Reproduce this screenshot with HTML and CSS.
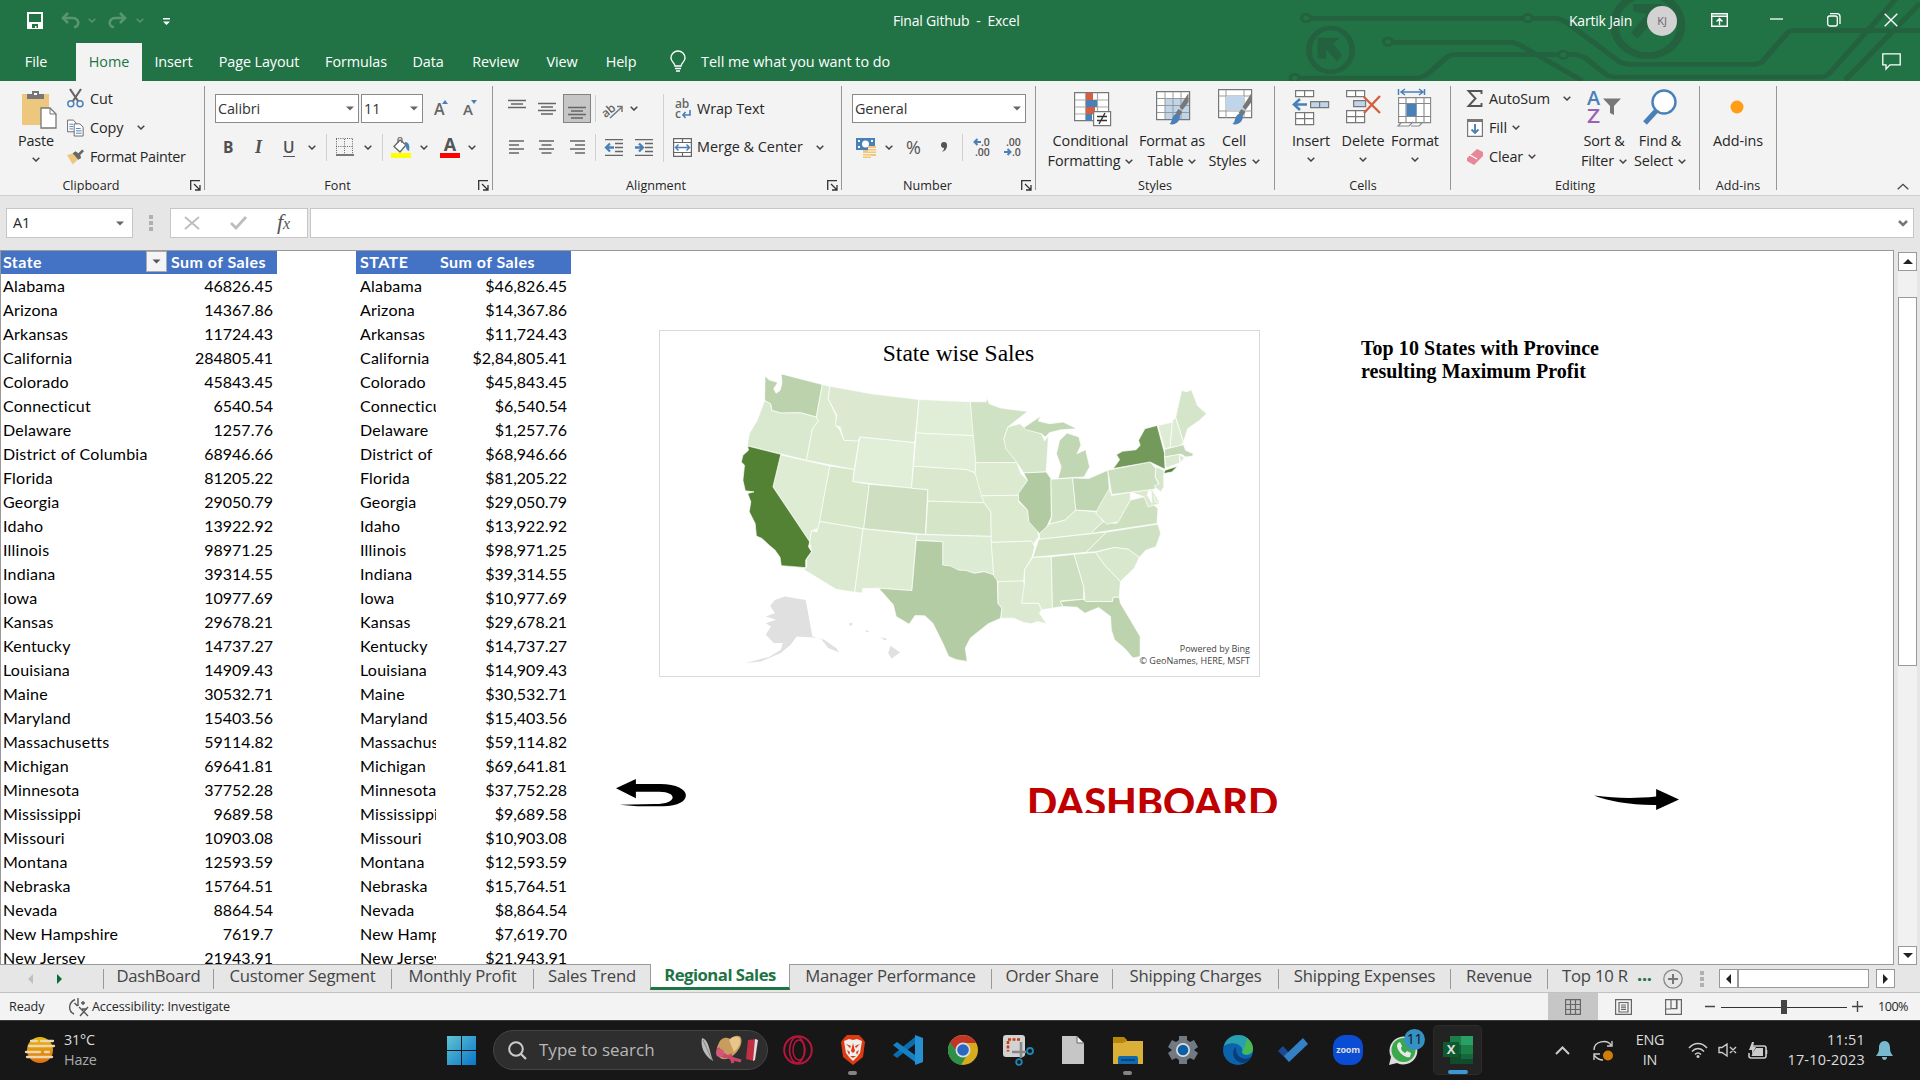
FILE: index.html
```html
<!DOCTYPE html>
<html lang="en">
<head>
<meta charset="utf-8">
<title>Final Github - Excel</title>
<link rel="stylesheet" href="styles.css">
</head>
<body>
<svg class="defs" width="0" height="0">
  <symbol id="chev" viewBox="0 0 8 5"><path d="M.7.7 4 4 7.3.7" fill="none" stroke="currentColor" stroke-width="1.5"/></symbol>
  <symbol id="tri" viewBox="0 0 8 5"><path d="M0 .5h8L4 4.5z" fill="currentColor"/></symbol>
  <symbol id="launch" viewBox="0 0 11 11"><path d="M.7 10V.7H10M4 4l5.5 5.5M10 5v5H5" fill="none" stroke="#333" stroke-width="1.3"/></symbol>
  <symbol id="brush" viewBox="0 0 20 34"><path d="M19 0v9l-6 8-3-3z" fill="#777"/><path d="M9 16l4 3-3 4-4-3z" fill="#777"/><path d="M6 21c4-1 6 3 3 7-2 3-6 4-9 3 3-2 2-8 6-10z" fill="#4a80b8"/></symbol>
</svg>

<header class="top">
  <svg class="circuit" viewBox="0 0 1568 243" preserveAspectRatio="none">
    <g fill="none" stroke="#24613f" stroke-width="14">
      <path d="M78 55H593M620 55h60l20 10L835 188l20 5h310l15-6 65-91 10-4h318"/>
      <path d="M280 127h290l18 8L740 242M50 234h290l18-8 50-54 14-8h258M706 164h22l20 10 54 52 16 5h512l14-8L1510-5M1385 240 1568 10"/>
      <circle cx="64" cy="54" r="11" stroke-width="8"/><circle cx="607" cy="54" r="11" stroke-width="8"/><circle cx="265" cy="125" r="11" stroke-width="8"/><circle cx="694" cy="164" r="11" stroke-width="8"/><circle cx="36" cy="234" r="11" stroke-width="8"/>
      <ellipse cx="124" cy="150" rx="53" ry="66"/><ellipse cx="901" cy="75" rx="82" ry="92" stroke-width="20"/>
    </g>
    <path d="M92 113h55l-17 18 22 34-12 20-27-37v28H92z" fill="#24613f"/>
    <path d="M865 12h70v70l-20-20-40 55-15-18 38-56-33-10z" fill="#24613f"/>
  </svg>
  <div class="titlebar">
    <svg width="16" height="17" viewBox="0 0 16 17"><path d="M1 1h14v15H1z" fill="none" stroke="#fff" stroke-width="2"/><path d="M1 10h14v6H1z" fill="#fff"/><path d="M5 12h6v4H9.500v-2H8v2H5z" fill="#217346"/></svg>
    <svg class="dim" width="19" height="16" viewBox="0 0 19 16"><path d="M7 1 2 6l5 5M2 6h9c8 0 8 9 2 9" fill="none" stroke="currentColor" stroke-width="2.600"/></svg>
    <svg class="dim" width="8" height="5"><use href="#chev"/></svg>
    <svg class="dim" width="19" height="16" viewBox="0 0 19 16"><path d="m12 1 5 5-5 5M17 6H8C0 6 0 15 6 15" fill="none" stroke="currentColor" stroke-width="2.600"/></svg>
    <svg class="dim" width="8" height="5"><use href="#chev"/></svg>
    <svg class="qat" width="7" height="8" viewBox="0 0 7 8"><path d="M0 0h7v1.500H0zM0 3.500h7L3.500 7z" fill="#fff"/></svg>
    <span class="doc">Final Github&nbsp; -&nbsp; Excel</span>
    <span class="user">Kartik Jain</span>
    <span class="avatar">KJ</span>
    <svg width="17" height="14" viewBox="0 0 17 14"><path d="M.7.7h15.600v12.600H.7zM.7 3.300h15.600M8.500 12V6M5.500 8.500l3-3 3 3" fill="none" stroke="#fff" stroke-width="1.400"/></svg>
    <svg width="13" height="14" viewBox="0 0 13 14"><path d="M0 6h13" stroke="#fff" stroke-width="1.300"/></svg>
    <svg width="14" height="14" viewBox="0 0 14 14"><rect x=".7" y="3" width="9.600" height="10" rx="2" fill="none" stroke="#fff" stroke-width="1.300"/><path d="M3 .7h7a3 3 0 0 1 3 3V11" fill="none" stroke="#fff" stroke-width="1.300"/></svg>
    <svg width="14" height="14" viewBox="0 0 14 14"><path d="m.7.7 12.600 12.600M13.300.7.7 13.300" stroke="#fff" stroke-width="1.400"/></svg>
  </div>
  <nav class="tabs">
    <span>File</span><span class="on">Home</span><span>Insert</span><span>Page Layout</span><span>Formulas</span><span>Data</span><span>Review</span><span>View</span><span>Help</span>
    <svg width="16" height="21" viewBox="0 0 16 21"><path d="M5 15c0-3-4-4-4-8a7 7 0 0 1 14 0c0 4-4 5-4 8zM5 17.500h6M6 20h4" fill="none" stroke="#fff" stroke-width="1.400"/></svg>
    <span class="tell">Tell me what you want to do</span>
    <svg width="19" height="17" viewBox="0 0 19 17"><path d="M.8.8h17.400v11H8L4 16v-4.200H.8z" fill="none" stroke="#fff" stroke-width="1.300"/></svg>
  </nav>
</header>

<section class="ribbon">
  <div class="group">
    <div class="clip">
      <div class="big paste">
        <svg width="35" height="39" viewBox="0 0 35 39"><path d="M0 4h27v31H0z" fill="#eec77e"/><path d="M5 9V4h5V1h7v3h5v5z" fill="#777"/><path d="M12 3h3v2h-3z" fill="#fff"/><path d="M19 18h9l6 6v14H19z" fill="#fff" stroke="#777" stroke-width="1.300"/><path d="M28 18v6h6" fill="none" stroke="#777"/></svg>
        <span>Paste</span><svg class="chev"><use href="#chev"/></svg>
      </div>
      <div class="list">
        <div><svg width="17" height="19" viewBox="0 0 17 19"><path d="M3 0l8 12M14 0 6 12" stroke="#666" stroke-width="2.200"/><circle cx="3.800" cy="14.800" r="3" fill="none" stroke="#4a80b8" stroke-width="1.500"/><circle cx="13" cy="14.800" r="3" fill="none" stroke="#4a80b8" stroke-width="1.500"/></svg><span>Cut</span></div>
        <div><svg width="18" height="18" viewBox="0 0 18 18"><path d="M.6.600h6l3 3V13h-9z" fill="#fff" stroke="#666"/><path d="M7.600 4.600h6l3.500 3.500v9.400H7.600z" fill="#fff" stroke="#666"/><path d="M9.500 9.500h5M9.500 12h6M9.500 14.500h6M2.500 5h4M2.500 7.500h4M2.500 10h4" stroke="#4a80b8"/></svg><span>Copy</span><svg class="chev"><use href="#chev"/></svg></div>
        <div><svg width="18" height="16" viewBox="0 0 18 16"><path d="M0 6l7-2 5 6-6 6z" fill="#eec77e"/><path d="m6 4 3-2 3 2 4-4 2 2-4 4 1 3-3 2z" fill="#666"/></svg><span class="tight">Format Painter</span></div>
      </div>
    </div>
    <div class="label"><span>Clipboard</span><svg class="launch"><use href="#launch"/></svg></div>
  </div>

  <div class="group">
    <div class="two">
      <div class="row font-a">
        <div class="box w144">Calibri<svg class="tri"><use href="#tri"/></svg></div>
        <div class="box w62">11<svg class="tri"><use href="#tri"/></svg></div>
        <span class="sizer">A<svg width="6" height="4" viewBox="0 0 6 4"><path d="M0 4 3 0l3 4z" fill="#4a80b8"/></svg></span>
        <span class="sizer small">A<svg width="6" height="4" viewBox="0 0 6 4"><path d="M0 0h6L3 4z" fill="#4a80b8"/></svg></span>
      </div>
      <div class="row font-b">
        <b class="g">B</b><i class="g it">I</i><u class="g">U</u><svg class="chev"><use href="#chev"/></svg><i class="sep"></i>
        <svg width="18" height="18" viewBox="0 0 18 18"><path d="M.5 1v15M8.500 1v15M16.500 1v15M0 .5h17M0 8.500h17" stroke="#666" stroke-dasharray="1 1.200"/><path d="M0 17h18" stroke="#444" stroke-width="1.400"/></svg>
        <svg class="chev"><use href="#chev"/></svg><i class="sep"></i>
        <svg width="20" height="21" viewBox="0 0 20 21"><path d="M9 3 3 9.500 9 15l6-7z" fill="#fff" stroke="#666" stroke-width="1.300"/><path d="M7 6V2c0-2 4-2 4 0v4" fill="none" stroke="#666" stroke-width="1.200"/><path d="M14 5c4 0 5 4 4 9-2 0-3-3-4-7z" fill="#4a80b8"/><path d="M0 16h20v5H0z" fill="#ff0"/></svg>
        <svg class="chev"><use href="#chev"/></svg>
        <span class="acol">A</span>
        <svg class="chev"><use href="#chev"/></svg>
      </div>
    </div>
    <div class="label"><span>Font</span><svg class="launch"><use href="#launch"/></svg></div>
  </div>

  <div class="group">
    <div class="two">
      <div class="row al-a">
        <svg width="18" height="20" viewBox="0 0 18 20"><path d="M0 4.500h18M3 8h12M0 11.500h18" transform="translate(0 -3)" class="ln"/></svg>
        <svg width="18" height="20" viewBox="0 0 18 20"><path d="M0 4.500h18M3 8h12M0 11.500h18M3 15h12" class="ln"/></svg>
        <span class="sel"><svg width="18" height="20" viewBox="0 0 18 20"><path d="M0 8.500h18M3 12h12M0 15.500h18M3 19h12" class="ln"/></svg></span>
        <i class="sep"></i>
        <svg width="20" height="20" viewBox="0 0 20 20"><text x="-3" y="13" font-size="12" font-weight="600" fill="#666" transform="rotate(-40 8 10)">ab</text><path d="M6 19 18 8M18 13V7.500h-5" fill="none" stroke="#777" stroke-width="1.500"/></svg>
        <svg class="chev"><use href="#chev"/></svg><i class="sep tall"></i>
        <svg width="17" height="20" viewBox="0 0 17 20"><text x="0" y="9" font-size="12" font-weight="600" fill="#666">ab</text><text x="0" y="19" font-size="12" font-weight="600" fill="#666">c</text><path d="M15 11v5H8M10.500 13 8 16l2.500 3" fill="none" stroke="#4a80b8" stroke-width="1.600"/></svg>
        <span>Wrap Text</span>
      </div>
      <div class="row al-b">
        <svg width="15" height="18" viewBox="0 0 15 18"><path d="M0 3h15M0 7h10M0 11h15M0 15h10" class="ln"/></svg>
        <svg width="15" height="18" viewBox="0 0 15 18"><path d="M0 3h15M2.500 7h10M0 11h15M2.500 15h10" class="ln"/></svg>
        <svg width="15" height="18" viewBox="0 0 15 18"><path d="M0 3h15M5 7h10M0 11h15M5 15h10" class="ln"/></svg>
        <i class="sep"></i>
        <svg width="18" height="17" viewBox="0 0 18 17"><path d="M0 .7h18M10 4.500h8M10 8.500h8M10 12.500h8M0 16.300h18" class="ln"/><path d="M9 8.500H2M5 4.500l-4 4 4 4" fill="none" stroke="#4a80b8" stroke-width="2.300"/></svg>
        <svg width="18" height="17" viewBox="0 0 18 17"><path d="M0 .7h18M10 4.500h8M10 8.500h8M10 12.500h8M0 16.300h18" class="ln"/><path d="M0 8.500h7M4 4.500l4 4-4 4" fill="none" stroke="#4a80b8" stroke-width="2.300"/></svg>
        <svg width="19" height="19" viewBox="0 0 19 19"><path d="M.6.600h17.800v17.800H.6zM.6 4.500h17.800M.6 14.500h17.800M9.500.6v4M9.500 14.500v4" fill="#fff" stroke="#666" stroke-width="1.200"/><path d="M3 9.500h13M5.500 6.500l-3 3 3 3M13.500 6.500l3 3-3 3" fill="none" stroke="#4a80b8" stroke-width="1.500"/></svg>
        <span>Merge &amp; Center</span>
        <svg class="chev"><use href="#chev"/></svg>
      </div>
    </div>
    <div class="label"><span>Alignment</span><svg class="launch"><use href="#launch"/></svg></div>
  </div>

  <div class="group">
    <div class="two">
      <div class="row nu-a"><div class="box w174">General<svg class="tri"><use href="#tri"/></svg></div></div>
      <div class="row nu-b">
        <svg width="20" height="21" viewBox="0 0 20 21"><path d="M0 1h19v12H0z" fill="#4a80b8"/><circle cx="9.500" cy="7" r="3.500" fill="#fff"/><path d="M2 3h2v2H2zM15 3h2v2h-2zM2 9h2v2H2z" fill="#fff"/><path d="M12 9h8v10h-5v2H7v-8h5z" fill="#eec77e"/><path d="M12 11.500h8M12 14h8M7 16.500h13M7 19h8" stroke="#fff" stroke-width=".8"/></svg>
        <svg class="chev"><use href="#chev"/></svg>
        <span class="pct">%</span>
        <svg width="8" height="12" viewBox="0 0 8 12"><circle cx="4" cy="4" r="3" fill="#555"/><path d="M7 4c0 4-2 6-5 7 1.500-2 2.500-3 2-6z" fill="#555"/></svg>
        <i class="sep"></i>
        <svg width="17" height="18" viewBox="0 0 17 18"><text x="8" y="8" class="dec">.0</text><text x="2" y="17.500" class="dec">.00</text><path d="M8 4H2M4.500 1 1.500 4l3 3" fill="none" stroke="#4a80b8" stroke-width="2"/></svg>
        <svg width="17" height="18" viewBox="0 0 17 18"><text x="2" y="8" class="dec">.00</text><text x="8" y="17.500" class="dec">.0</text><path d="M0 14h6M3.500 11l3 3-3 3" fill="none" stroke="#4a80b8" stroke-width="2"/></svg>
      </div>
    </div>
    <div class="label"><span>Number</span><svg class="launch"><use href="#launch"/></svg></div>
  </div>

  <div class="group">
    <div class="bigs st">
      <div class="big">
        <svg width="38" height="38" viewBox="0 0 38 38"><path d="M.6 3.600h34v28H.6z" fill="#fff" stroke="#777" stroke-width="1.200"/><path d="M1 11h33M1 18h33M1 25h33M11.500 4v27M23.500 4v27" stroke="#aaa" stroke-width="1.200"/><path d="M12 4h7v7h-7zM12 18h9v7h-9z" fill="#d65f3e"/><path d="M12 11h11v7H12zM12 25h6v7h-6z" fill="#4a80b8"/><path d="M19.600 22.600h17v14h-17z" fill="#fff" stroke="#777" stroke-width="1.200"/><path d="M23 27.500h10M23 31.500h10M31 24l-6 11" stroke="#333" stroke-width="1.400"/></svg>
        <span>Conditional</span><span>Formatting <svg class="chev"><use href="#chev"/></svg></span>
      </div>
      <div class="big">
        <svg width="38" height="38" viewBox="0 0 38 38"><path d="M.6 2.600h33v28H.6z" fill="#fff" stroke="#777" stroke-width="1.200"/><path d="M9 10h24v20H9z" fill="#c0d4ea"/><path d="M1 9.500h32M1 16.500h32M1 23.500h32M9 3v27M17 3v27M25 3v27" stroke="#999"/><use href="#brush" x="10" y="4" width="27" height="34"/></svg>
        <span>Format as</span><span>Table <svg class="chev"><use href="#chev"/></svg></span>
      </div>
      <div class="big">
        <svg width="38" height="38" viewBox="0 0 38 38"><path d="M.6.600h33v28H.6z" fill="#fff" stroke="#777" stroke-width="1.200"/><path d="M1 7h33M1 22h33M8 1v28M26 1v28" stroke="#999"/><path d="M8 7h18v14H8z" fill="#c0d4ea"/><use href="#brush" x="11" y="4" width="27" height="34"/></svg>
        <span>Cell</span><span>Styles <svg class="chev"><use href="#chev"/></svg></span>
      </div>
    </div>
    <div class="label wide"><span>Styles</span></div>
  </div>

  <div class="group">
    <div class="bigs ce">
      <div class="big">
        <svg width="38" height="38" viewBox="0 0 38 38"><path d="M3.600 1.600h18v6h-18zM12.600 1.600v6M3.600 23.600h18v12h-18zM3.600 29.600h18M12.600 23.600v12" fill="#fff" stroke="#777" stroke-width="1.200"/><path d="M18.600 12.600h18v6h-18zM27.600 12.600v6" fill="#c0d4ea" stroke="#777" stroke-width="1.200"/><path d="M15 15.500H3M8 10l-6 5.500 6 5.500" fill="none" stroke="#4a80b8" stroke-width="2.600"/></svg>
        <span>Insert</span><svg class="chev"><use href="#chev"/></svg>
      </div>
      <div class="big">
        <svg width="38" height="38" viewBox="0 0 38 38"><path d="M2.600 1.600h18v6h-18zM11.600 1.600v6M2.600 21.600h18v12h-18zM2.600 27.600h18M11.600 21.600v12" fill="#fff" stroke="#777" stroke-width="1.200"/><path d="M9.600 11.600h12v6h-12z" fill="#c0d4ea" stroke="#777" stroke-width="1.200"/><path d="m20 8 16 16M36 7 20 24" stroke="#d65f3e" stroke-width="2.400"/></svg>
        <span>Delete</span><svg class="chev"><use href="#chev"/></svg>
      </div>
      <div class="big">
        <svg width="36" height="38" viewBox="0 0 36 38"><path d="M1.500 0v6M27.500 0v6M4 3h21M8 0 4 3l4 3M22 0l4 3-4 3" fill="none" stroke="#4a80b8" stroke-width="1.500"/><path d="M1.600 8.600h32v25h-32zM1 14.500h32M1 27.500h32M9 9v25M19 9v25M27 9v25M4 34l-3 3h11l4-4M14 37h8l3-3" fill="#fff" stroke="#888" stroke-width="1.100"/><path d="M9.500 15h10v12h-10z" fill="#4a80b8"/></svg>
        <span>Format</span><svg class="chev"><use href="#chev"/></svg>
      </div>
    </div>
    <div class="label wide"><span>Cells</span></div>
  </div>

  <div class="group">
    <div class="edit">
      <div class="list ed">
        <div><svg width="15" height="17" viewBox="0 0 15 17"><path d="M14 4V1H1l7 7.500L1 16h13v-3" fill="none" stroke="#555" stroke-width="1.900"/></svg><span>AutoSum</span><svg class="chev far"><use href="#chev"/></svg></div>
        <div><svg width="16" height="18" viewBox="0 0 16 18"><path d="M.6.600h14.800v16.800H.6z" fill="#fff" stroke="#777" stroke-width="1.200"/><path d="M0 0h16v3H0z" fill="#777"/><path d="M8 5v9M4.500 10.500 8 14l3.500-3.500" fill="none" stroke="#4a80b8" stroke-width="1.900"/></svg><span>Fill</span><svg class="chev"><use href="#chev"/></svg></div>
        <div><svg width="16" height="16" viewBox="0 0 16 16"><path d="M10 0l6 3v4L7 16l-7-4v-3z" fill="#e8869a"/><path d="m3 6 7 4" stroke="#fff" stroke-width="1.200"/></svg><span>Clear</span><svg class="chev"><use href="#chev"/></svg></div>
      </div>
      <div class="big">
        <svg width="36" height="38" viewBox="0 0 36 38"><text x="1" y="16" font-size="20" font-weight="600" fill="#4a80b8" textLength="13" lengthAdjust="spacingAndGlyphs">A</text><text x="1" y="34" font-size="20" font-weight="600" fill="#9a62b4" textLength="13" lengthAdjust="spacingAndGlyphs">Z</text><path d="M17 9.500h18L28 17v9l-4-2v-7z" fill="#777"/></svg>
        <span>Sort &amp;</span><span>Filter <svg class="chev"><use href="#chev"/></svg></span>
      </div>
      <div class="big">
        <svg width="36" height="38" viewBox="0 0 36 38"><circle cx="22" cy="13" r="11.500" fill="#fff" stroke="#4a80b8" stroke-width="2.400"/><path d="m14 22-11 12" stroke="#4a80b8" stroke-width="5"/></svg>
        <span>Find &amp;</span><span>Select <svg class="chev"><use href="#chev"/></svg></span>
      </div>
    </div>
    <div class="label wide"><span>Editing</span></div>
  </div>

  <div class="group">
    <div class="bigs ad"><div class="big"><svg width="38" height="38" viewBox="0 0 38 38"><circle cx="18" cy="18" r="6.500" fill="#ff9d14"/></svg><span>Add-ins</span></div></div>
    <div class="label wide"><span>Add-ins</span></div>
  </div>
  <svg class="fold" width="12" height="7" viewBox="0 0 12 7"><path d="m.7 6.300 5.300-5 5.300 5" fill="none" stroke="#444" stroke-width="1.300"/></svg>
</section>

<section class="fbar">
  <div class="name">A1<svg class="tri"><use href="#tri"/></svg></div>
  <i class="dots"></i>
  <div class="fx">
    <svg width="16" height="14" viewBox="0 0 16 14"><path d="m1 1 14 12M15 1 1 13" stroke="#bdbdbd" stroke-width="1.800"/></svg>
    <svg width="17" height="14" viewBox="0 0 17 14"><path d="m1 7 5 5L16 1" fill="none" stroke="#bdbdbd" stroke-width="2.800"/></svg>
    <span>f<small>x</small></span>
  </div>
  <div class="formula"><svg width="10" height="7" viewBox="0 0 10 7"><path d="m1 1 4 4 4-4" fill="none" stroke="#777" stroke-width="2.500"/></svg></div>
</section>

<main class="work">
  <div class="sheet">
    <div class="cells" id="cells"></div>
    <figure class="chart">
      <figcaption>State wise Sales</figcaption>
      <svg class="map" viewBox="24 31 1517 1038" preserveAspectRatio="none" id="map"></svg>
      <p class="credit">Powered by Bing<br>© GeoNames, HERE, MSFT</p>
    </figure>
    <h2 class="note">Top 10 States with Province<br>resulting Maximum Profit</h2>
    <svg class="back" width="71" height="28" viewBox="0 0 100 84" preserveAspectRatio="none"><path d="M0 28 28 0v15h34c48 0 48 67 4 67H30L5 77l50-2c32 0 32-37 6-37H28v20z"/></svg>
    <div class="dash">DASHBOARD</div>
    <svg class="next" width="85" height="21" viewBox="0 0 119 62" preserveAspectRatio="none"><path d="M0 19c30 8 55 10 87 3V0l32 31-32 31V47C50 48 20 35 0 19z"/></svg>
  </div>
  <div class="vscroll"><b class="up"></b><i></i><b class="down"></b></div>
</main>

<nav class="sheets">
  <svg width="5" height="10" viewBox="0 0 5 10"><path d="M5 0v10L0 5z" fill="#c0c0c0"/></svg>
  <svg width="5" height="10" viewBox="0 0 5 10"><path d="M0 0v10l5-5z" fill="#0a6b38"/></svg>
  <span>DashBoard</span><span>Customer Segment</span><span>Monthly Profit</span><span>Sales Trend</span><span class="on">Regional Sales</span><span>Manager Performance</span><span>Order Share</span><span>Shipping Charges</span><span>Shipping Expenses</span><span>Revenue</span><span class="cut">Top 10 R</span>
  <em>...</em>
  <svg width="20" height="20" viewBox="0 0 20 20"><circle cx="10" cy="10" r="9.200" fill="none" stroke="#888" stroke-width="1.300"/><path d="M10 5v10M5 10h10" stroke="#777" stroke-width="2"/></svg>
  <i class="dots"></i>
  <div class="hscroll"><b class="lt"></b><i></i><b class="rt"></b></div>
</nav>

<footer class="status">
  <span>Ready</span>
  <svg width="20" height="18" viewBox="0 0 20 18"><path d="M6 1.500C-1 5-1 13 5 16M9 0v8M5.500 5 8.500 8M12 5l4 0M14 3v4M10 9l9 9M19 9l-8 9M13 11h5" fill="none" stroke="#555" stroke-width="1.400"/></svg>
  <span>Accessibility: Investigate</span>
  <span class="view on"><svg width="16" height="16" viewBox="0 0 16 16"><path d="M.6.600h14.800v14.800H.6zM5.500.6v15M10.500.6v15M.6 5.500h15M.6 10.500h15" class="vw"/></svg></span>
  <span class="view"><svg width="17" height="16" viewBox="0 0 17 16"><path d="M.6.600h15.800v14.800H.6zM4 3.500h9v9.500H4zM6 6h5M6 8.200h5M6 10.400h5" class="vw"/></svg></span>
  <span class="view"><svg width="17" height="16" viewBox="0 0 17 16"><path d="M.6.600h15.800v14.800H.6zM6 .6v9h6v-9M.6 10h5.500M11.500 10V.6" class="vw"/></svg></span>
  <svg class="zoom" width="158" height="14" viewBox="0 0 158 14"><path d="M0 6.500h10M147 6.500h11M152.500 1v11" stroke="#444" stroke-width="1.400"/><path d="M16 7.500h126" stroke="#333" stroke-width="1"/><path d="M76 0h6v14h-6z" fill="#444"/></svg>
  <span class="pc">100%</span>
</footer>

<footer class="taskbar">
  <svg width="30" height="28" viewBox="0 0 30 28"><defs><linearGradient id="sun" x2="0" y2="1"><stop stop-color="#e8b80e"/><stop offset="1" stop-color="#e07010"/></linearGradient></defs><circle cx="15" cy="14" r="13" fill="url(#sun)"/><path d="M6 5h6M16 5h12M4 10h25M1 16h14M20 16h4M2 21h25" stroke="#ead9b0" stroke-width="2.300" stroke-linecap="round"/></svg>
  <div class="wx">31°C<br><span>Haze</span></div>
  <svg width="29" height="29" viewBox="0 0 29 29"><defs><linearGradient id="win" x2="1" y2="1"><stop stop-color="#5fc4d4"/><stop offset="1" stop-color="#0876c8"/></linearGradient></defs><path d="M0 0h14v14H0zM15 0h14v14H15zM0 15h14v14H0zM15 15h14v14H15z" fill="url(#win)"/></svg>
  <div class="search">
    <svg width="19" height="19" viewBox="0 0 19 19"><circle cx="8" cy="8" r="6.800" fill="none" stroke="#ccc" stroke-width="2"/><path d="m13 13 5 5" stroke="#ccc" stroke-width="2.200"/></svg>
    <span>Type to search</span>
    <svg width="60" height="28" viewBox="0 0 60 28"><path d="M2 2c5 1 7 8 9 17l2 6-3-2C5 19 0 11 2 2z" fill="#bbb"/><path d="M3 4l9 20" stroke="#777" stroke-width=".8"/><path d="M18 9c2-7 8-9 12-6 4-4 10-4 11-1 2 5-2 14-10 19-5 3-9 3-12 0-3-2-3-8-1-12z" fill="#c79c5e"/><path d="M29 4c4-4 10-4 11-1 1 5-2 9-6 13z" fill="#eac58b"/><path d="M18 12c4 8 12 10 23 13M30 18l3 9M18 18l8 3" stroke="#c9476a" stroke-width="3.200" fill="none"/><circle cx="20" cy="17" r="4" fill="#d2577a"/><path d="m48 4 9-1-3 22-8-2z" fill="#c22f42"/><path d="m55 3 3 1-3 20-2 1z" fill="#ddd"/></svg>
  </div>
  <div class="apps">
    <span><svg viewBox="0 0 30 30"><circle cx="15" cy="15" r="13.800" fill="none" stroke="#b5163c" stroke-width="2"/><ellipse cx="14" cy="15" rx="7.500" ry="13" fill="none" stroke="#b5163c" stroke-width="1.700"/><ellipse cx="16" cy="15" rx="6" ry="10" fill="none" stroke="#b5163c" stroke-width="1.500"/></svg></span>
    <span class="run"><svg viewBox="0 0 30 30"><path d="M9 0h12l3 3 3 4-2 15-10 8L5 22 3 7l3-4z" fill="#dc3a10"/><path d="M6 6l5-2 4 1 4-1 5 2-2 12-3 4-4 4-4-4-3-4z" fill="#eee"/><path d="m8 9 5 2-1 2zM22 9l-5 2 1 2zM15 8l-2 8 2 2 2-2zM9 15l3 2-1 3zM21 15l-3 2 1 3zM12 21h6l-3 2z" fill="#dc3a10"/></svg></span>
    <span><svg viewBox="0 0 30 30"><path d="M1 19 22 2v7L4 23l-4-3z" fill="#0b6cae"/><path d="M1 11 22 27v-7L4 7 0 10z" fill="#1580c4"/><path d="m22 0 8 3v24l-8 3z" fill="#2590d2"/></svg></span>
    <span><svg viewBox="0 0 30 30"><circle cx="15" cy="15" r="15" fill="#d8aa1e"/><path d="M2 7.500A15 15 0 0 1 28 8H15v8l-6 3z" fill="#c23428"/><path d="M2 7.500A15 15 0 0 0 13 30l6-10-7 0z" fill="#2c9048"/><circle cx="15" cy="15" r="7.500" fill="#ddd"/><circle cx="15" cy="15" r="5.800" fill="#2a66c4"/></svg></span>
    <span><svg viewBox="0 0 30 30"><rect width="22" height="22" rx="3" fill="#d2d2d2"/><path d="M17 4.500H5v12" fill="none" stroke="#c43c14" stroke-width="2.600" stroke-dasharray="3 1.500"/><path d="M18 7v16M9 17h14" stroke="#888" stroke-width="2.600" fill="none"/><circle cx="27" cy="16" r="3" fill="none" stroke="#1e86b8" stroke-width="1.800"/><circle cx="16" cy="27" r="2.800" fill="none" stroke="#1e86b8" stroke-width="1.800"/></svg></span>
    <span><svg viewBox="0 0 30 30"><path d="M4 1h15l7 7v21H4z" fill="#c6c6c6"/><path d="M19 1v7h7z" fill="#eee" stroke="#666"/></svg></span>
    <span class="run"><svg viewBox="0 0 30 30"><path d="M0 2h11l3 3v8H0z" fill="#b9860c"/><path d="M0 8h10l4-2h16v23H0z" fill="#dbb038"/><path d="M5 29v-6q0-2 2-2h16q2 0 2 2v6z" fill="#0d6ab0"/><path d="M8 25h14" stroke="#0a3a66" stroke-width="1.500"/></svg></span>
    <span><svg viewBox="0 0 30 30"><path d="M11 1h8v4l3 2 4-2 4 7-4 3 4 3-4 7-4-2-3 2v4h-8v-4l-3-2-4 2-4-7 4-3-4-3 4-7 4 2 3-2z" fill="#717983"/><circle cx="15" cy="15" r="7" fill="#ddd"/><circle cx="15" cy="15" r="5.300" fill="#0c5fa4"/></svg></span>
    <span><svg viewBox="0 0 30 30"><circle cx="15" cy="15" r="15" fill="#0b63ac"/><path d="M1 11C4-3 27-5 30 13c1 7-8 9-11 5 3-8-10-13-18-7z" fill="#27a0b0"/><path d="M24 3c7 5 8 14 2 16-5 1-8-1-6-4 3-5 3-8 4-12z" fill="#48b850"/><path d="M13 12c-6 5-2 16 8 16 4-1 7-4 7-6-6 4-16 1-15-10z" fill="#0a3c7a"/></svg></span>
    <span><svg viewBox="0 0 30 30"><path d="m0 16 5-5 8 9-2 7z" fill="#194a94"/><path d="m11 27-5-6L25 3l5 6z" fill="#3480c4"/></svg></span>
    <span><svg viewBox="0 0 30 30"><rect width="30" height="30" rx="12" fill="#0b4cd4"/><text x="15" y="18" text-anchor="middle" font-size="9" font-weight="700" fill="#ddd">zoom</text></svg></span>
    <span class="wa"><svg viewBox="0 0 30 30"><path d="M1 30 3 22A14 14 0 1 1 9 28z" fill="#ddd"/><circle cx="15.500" cy="15" r="12" fill="#3aa94c"/><path d="M10 8c-4 5 6 16 12 14l1-4-4-2-2 2c-2-1-4-3-4-5l1-2-2-4z" fill="#e8e8e8"/></svg><b>11</b></span>
    <span class="active"><svg viewBox="0 0 30 30"><path d="M7 1h23v28H7z" fill="#1c7f48"/><path d="M18 1h12v9H18z" fill="#2aa068"/><path d="M7 10h11v9H7z" fill="#15603a"/><path d="M7 19h23v10H7z" fill="#124a2c"/><path d="M18 19h12v5H18z" fill="#14683c"/><path d="M0 7h16v15H0z" fill="#0d5a30"/><text x="8" y="19" text-anchor="middle" font-size="13" font-weight="700" fill="#ddd">X</text></svg></span>
  </div>
  <svg width="15" height="9" viewBox="0 0 15 9"><path d="m1 8 6.500-6.500L14 8" fill="none" stroke="#ccc" stroke-width="2"/></svg>
  <svg width="21" height="21" viewBox="0 0 21 21"><path d="M1 10C1 1 14-1 18 5M19 1v5h-5M1 20v-6h6M1 15c3 4 6 5 9 5" fill="none" stroke="#ccc" stroke-width="1.400"/><circle cx="15" cy="15.500" r="5" fill="#d07c08"/></svg>
  <div class="lang">ENG<br>IN</div>
  <svg width="20" height="16" viewBox="0 0 20 16"><path d="M1 6c5-6 13-6 18 0M4 9.500c3.500-4 8.500-4 12 0M7 12.500c2-2 4-2 6 0" fill="none" stroke="#ccc" stroke-width="1.500"/><circle cx="10" cy="14.500" r="1.500" fill="#ccc"/></svg>
  <svg width="20" height="14" viewBox="0 0 20 14"><path d="M1 4.500h3L9 1v12L4 9.500H1zM12 4l6 6M18 4l-6 6" fill="none" stroke="#ccc" stroke-width="1.400"/></svg>
  <svg width="20" height="17" viewBox="0 0 20 17"><path d="M5 4h11q2 0 2 2v8q0 2-2 2H3q-2 0-2-2v-3M18.500 8v4" fill="none" stroke="#ccc" stroke-width="1.600"/><path d="M8 6h7v8H3.500l1-3z" fill="#ccc"/><path d="M4 0 1 8h3v4l4-7H5l1-5z" fill="#ccc"/></svg>
  <div class="clock">11:51<br>17-10-2023</div>
  <svg width="17" height="19" viewBox="0 0 17 19"><path d="M8.500 0C4 0 3 4 3 7c0 4-1 5-3 8h17c-2-3-3-4-3-8 0-3-1-7-5.500-7zM6 16h5c0 4-5 4-5 0z" fill="#77b9cf"/></svg>
</footer>
<script src="app.js"></script>
</body>
</html>
```
FILE: styles.css
```css
* { box-sizing: border-box; }
body {
  margin: 0; width: 1920px; height: 1080px; overflow: hidden;
  display: flex; flex-direction: column;
  font: 14.4px/20px "Open Sans", "Noto Sans", sans-serif; color: #262626;
  background: #e6e6e6; letter-spacing: -.1px;
}
svg { display: block; flex: none; overflow: visible; }
span { white-space: nowrap; }
.defs { position: absolute; }
.chev { width: 8px; height: 5px; color: #444; }
.tri { width: 8px; height: 5px; color: #666; }
.launch { width: 11px; height: 11px; }
.ln { fill: none; stroke: #666; stroke-width: 1.3; }
.tight { letter-spacing: -.35px; }

.top { position: relative; height: 81px; background: #217346; color: #fff; flex: none; }
.circuit { position: absolute; right: 0; top: 0; width: 640px; height: 81px; overflow: hidden; }
.titlebar {
  position: relative; height: 42px; padding: 0 0 2px 27px; display: grid; align-items: center;
  grid-template-columns: 34px 27px 20px 28px 27px 730px 676px 78px 64px 59px 57px 57px 20px;
  font-size: 14px; letter-spacing: -.2px;
}
.titlebar span { margin-top: 2px; }
.titlebar svg:nth-last-child(-n+4) { margin-top: -1px; }
.dim { color: #59966f; }
.titlebar .qat { margin-top: 3px; }
.avatar {
  width: 30px; height: 30px; border-radius: 50%; background: #d2d2d2; color: #666;
  font-size: 11px; line-height: 30px; text-align: center;
}
.tabs {
  position: relative; height: 39px; display: grid; align-items: center; text-align: center;
  grid-template-columns: 74px 69px 61px 110px 84px 60px 75px 58px 60px 36px 1196px 20px;
}
.tabs span:first-child { padding-right: 2px; }
.tabs .on { background: #f3f3f3; color: #217346; height: 38px; line-height: 37px; margin: 1px 1px 0 2px; align-self: end; }
.tabs svg { margin-left: 19px; }
.tabs svg:last-child { margin-left: -1px; }
.tabs .tell { text-align: left; padding-left: 14px; letter-spacing: 0; }

.ribbon {
  height: 115px; padding-top: 5px; background: #f3f3f3; border-bottom: 1px solid #d0d0d0; display: grid; flex: none;
  grid-template-columns: 205px 288px 349px 194px 239px 176px 249px 77px 143px; align-items: start;
}
.group { height: 104px; border-right: 1px solid #969696; display: grid; grid-template-rows: 94px 10px; }
.label { display: flex; line-height: 10px; font-size: 12.6px; letter-spacing: 0; text-align: center; }
.label span { flex: 1; margin-right: 8px; line-height: 12px; }
.label.wide span { margin-right: 0; }
.label svg { margin-right: 3px; }
.fold { align-self: end; margin: 0 0 5px 120px; }
.big { display: flex; flex-direction: column; align-items: center; }
.big > svg:first-child { height: 38px; margin-bottom: 4px; }
.big span { height: 20px; display: flex; align-items: center; gap: 5px; }
.big > .chev { margin-top: 6px; }
.clip { display: flex; }
.paste { width: 72px; padding-top: 4px; }
.paste > svg:first-child { margin-left: 7px; margin-bottom: 2px; height: 39px; }
.list { margin: -2px 0 0 -5px; }
.list div { height: 29px; display: flex; align-items: center; }
.list div svg:first-child { width: 17px; margin-right: 6px; }
.list span + .chev { margin-left: 14px; }
.two { padding-top: 8px; display: grid; grid-template-rows: 29px 30px; row-gap: 9px; align-content: start; }
.row { display: grid; align-items: center; }
.box {
  height: 29px; background: #fff; border: 1px solid #8a8a8a; display: flex; align-items: center;
  justify-content: space-between; padding: 0 4px 0 2px; color: #333;
}
.w144 { width: 144px; } .w62 { width: 62px; } .w174 { width: 174px; }
.font-a { padding-left: 10px; grid-template-columns: 146px 73px 29px 20px; }
.sizer { font-size: 16px; font-weight: 600; color: #666; display: flex; align-items: flex-start; }
.sizer svg { margin: 1px 0 0 -2px; }
.sizer.small { font-size: 15px; }
.font-b { padding-left: 18px; grid-template-columns: 32px 28px 25px 18px 10px 28px 18px 9px 29px 20px 28px 10px; }
.g { font-size: 15.500px; font-weight: 700; color: #505050; }
.g.it { font-family: "Liberation Serif", serif; font-size: 18px; font-style: italic; }
u.g { text-decoration: none; border-bottom: 1.500px solid #555; width: 12px; line-height: 18px; font-weight: 600; }
.sep { width: 1px; height: 27px; background: #d0d0d0; }
.sep.tall { height: 68px; align-self: start; margin-bottom: -41px; }
.acol { width: 20px; height: 21px; border-bottom: 5px solid #f00; text-align: center; font-weight: 700; font-size: 18px; line-height: 14px; color: #555; }
.al-a { padding-left: 15px; grid-template-columns: 30px 25px 32px 9px 26px 33px 12px 22px 100px; }
.sel { width: 28px; height: 29px; background: #c6c6c6; border: 1px solid #828282; display: grid; place-items: center; }
.al-b { padding-left: 16px; grid-template-columns: 30px 31px 25px 10px 30px 38px 24px 119px 10px; }
.al-b span { letter-spacing: 0; }
.nu-a { padding-left: 10px; }
.nu-b { padding-left: 14px; grid-template-columns: 29px 21px 34px 22px 11px 31px 20px; }
.pct { font-size: 18px; color: #555; }
.dec { font-size: 10.500px; font-weight: 600; fill: #555; }
.bigs, .edit { display: grid; padding-top: 3px; }
.st { grid-template-columns: 109px 54px 70px; }
.st .big > svg:first-child { margin-left: 5px; }
.ce { grid-template-columns: 72px 32px 72px; }
.st .big:nth-child(n+2) { margin: 0 -12px; }
.ce .big:nth-child(2) { margin: 0 -12px; }
.ad { grid-template-columns: 76px; }
.edit { grid-template-columns: 125px 56px 56px; }
.edit .ed { margin: -5px 0 0 16px; }
.ed div svg:first-child { margin-right: 6px; width: 16px; }
.ed span + .chev { margin-left: 5px; }
.ed span + .far { margin-left: 13px; }

.fbar { height: 54px; display: grid; flex: none; grid-template-columns: 127px 37px 138px 2px 1604px; padding: 12px 0 0 6px; }
.name, .fx, .formula { height: 30px; background: #fff; border: 1px solid #c6c6c6; display: flex; align-items: center; }
.name { justify-content: space-between; padding: 0 8px 0 6px; }
.fx { justify-content: space-between; padding: 0 17px 0 13px; }
.fx span { font: italic 22px/24px "Liberation Serif", serif; color: #555; }
.fx small { font-size: 16px; }
.formula { grid-column: 5; justify-content: flex-end; padding-right: 5px; }
.dots { width: 4px; height: 16px; align-self: center; background: repeating-linear-gradient(#b0b0b0 0 4px, transparent 4px 6px); }
.fbar .dots { margin: 0 0 13px 16px; }

.work { height: 715px; display: flex; flex: none; }
.sheet { position: relative; width: 1894px; height: 715px; background: #fff; border: 1px solid #999; overflow: hidden; }
.cells { display: grid; grid-template-columns: 166px 110px 79px 80px 135px; grid-auto-rows: 24px; grid-template-rows: 23px; font: 16px/23px Lato, sans-serif; color: #000; letter-spacing: .22px; font-variant-ligatures: none; }
.cells span { padding-left: 2px; overflow: hidden; height: 24px; line-height: 24px; }
.cells .num { text-align: right; padding-right: 4px; letter-spacing: 0; }
.cells .h { padding-left: 4px; }
.cells .hd { background: #4472c4; color: #fff; font-weight: 700; height: 23px; line-height: 22px; display: flex; justify-content: space-between; padding-left: 2px; letter-spacing: .45px; }
.cells .hd.s { padding-left: 4px; }
.hd svg { width: 21px; height: 21px; padding: 7px 5px; background: #f4f4f6; border: 1px solid #aaa; color: #555; }
.chart { position: absolute; left: 658px; top: 79px; width: 601px; height: 347px; margin: 0; border: 1px solid #d9d9d9; background: #fff; }
.chart figcaption { padding: 9px 2px 0 0; text-align: center; font: 23.500px/27px "Liberation Serif", serif; color: #000; letter-spacing: 0; }
.map { position: absolute; left: 0; top: 0; width: 599px; height: 345px; }
.credit { position: absolute; right: 9px; bottom: 9px; margin: 0; text-align: right; font-size: 9px; line-height: 12px; color: #444; letter-spacing: 0; }
.note { position: absolute; left: 1360px; top: 86px; margin: 0; font: bold 20px/23px "Liberation Serif", serif; color: #000; letter-spacing: .05px; }
.back { position: absolute; left: 615px; top: 528px; }
.next { position: absolute; left: 1593px; top: 538px; }
.dash { position: absolute; left: 1026px; top: 529px; width: 260px; height: 33px; overflow: hidden; font: 900 39.700px/44px Lato, sans-serif; color: #c00000; letter-spacing: 0; white-space: nowrap; }

.vscroll { margin: 2px 0 0 4px; width: 19px; height: 713px; background: #f1f1f1; display: grid; grid-template-rows: 19px 26px 369px 1fr 19px; }
.vscroll i, .vscroll b, .hscroll i, .hscroll b { background: #fff; border: 1px solid #999; }
.vscroll i { grid-row: 3; } .vscroll .down { grid-row: 5; }
.up, .down, .lt, .rt { display: grid; place-items: center; }
.up::after { content: ""; border: 5px solid transparent; border-bottom-color: #222; border-top: 0; }
.down::after { content: ""; border: 5px solid transparent; border-top-color: #222; border-bottom: 0; }
.lt::after { content: ""; border: 5px solid transparent; border-right-color: #222; border-left: 0; }
.rt::after { content: ""; border: 5px solid transparent; border-left-color: #222; border-right: 0; }

.sheets {
  height: 29px; margin-top: -1px; display: grid; flex: none; align-items: center; position: relative; text-align: center; border-bottom: 1px solid #c2c2c2;
  grid-template-columns: 29px 46px 111px 178px 142px 116px 140px 202px 121px 166px 172px 97px 85px 30px 37px 19px 178px;
  padding-left: 28px; font-size: 16.700px; letter-spacing: -.2px; color: #444;
}
.sheets > span { height: 20px; margin-bottom: 0; line-height: 14px; border-right: 1px solid #999; }
.sheets > span:nth-of-type(1) { border-left: 1px solid #999; letter-spacing: -.3px; }
.sheets > span.on { height: 26px; line-height: 22px; margin-bottom: 3px; background: #fff; font-weight: 700; color: #217346; border-bottom: 3px solid #217346; letter-spacing: -.5px; border-left: 1px solid #999; }
.sheets > span:nth-of-type(4) { border-right: 0; }
.sheets .cut { border: 0; padding-left: 14px; text-align: left; width: 82px; overflow: hidden; }
.sheets em { font: 700 18px/16px "Open Sans", sans-serif; color: #217346; text-align: left; padding-left: 4px; margin-top: -9px; }
.hscroll { height: 19px; display: grid; grid-template-columns: 19px 131px 7px 19px; }
.hscroll .rt { grid-column: 4; }

.status {
  height: 27px; background: #f3f3f3; display: grid; flex: none; align-items: center; font-size: 12.600px; letter-spacing: -.1px;
  grid-template-columns: 60px 23px 1456px 50px 50px 51px 7px 172px 40px; padding-left: 9px;
}
.status > span:not(.view) { padding-top: 1px; }
.view { height: 27px; display: grid; place-items: center; }
.view.on { background: #c6c6c6; }
.vw { fill: none; stroke: #666; stroke-width: 1.200; }
.zoom { grid-column: 8; margin-left: -1px; }
.pc { letter-spacing: -.5px; }

.taskbar {
  height: 60px; background: #171717; border-top: 1px solid #3a3a3a; display: grid; flex: none; align-items: center; color: #ddd; position: relative;
  grid-template-columns: 39px 383px 46px 277px 785px 38px 38px 57px 30px 30px 20px 97px 11px 20px; padding: 0 0 1px 25px; line-height: 20px; letter-spacing: -.2px;
}
.wx span { color: #aaa; }
.search { height: 40px; width: 275px; border-radius: 20px; background: #2e2e2e; border: 1px solid #444; display: grid; align-items: center; grid-template-columns: 31px 161px 60px; padding-left: 14px; font-size: 17px; color: #b8b8b8; letter-spacing: 0; }
.apps { display: flex; height: 50px; }
.apps span { width: 55px; height: 50px; display: grid; place-items: center; position: relative; }
.apps span > svg { width: 30px; height: 30px; }
.run::after, .active::after { content: ""; position: absolute; left: 23px; bottom: 0; width: 9px; height: 4px; border-radius: 2px; background: #848484; }
.apps .active { background: #232323; width: 49px; margin-left: 3px; border-radius: 5px; border: 1px solid #2c2c2c; }
.active::after { left: 14px; width: 20px; background: #3c98d2; }
.wa b { position: absolute; left: 29px; top: 4px; width: 21px; height: 21px; border-radius: 50%; background: #3590c4; color: #111; font: 14px/20px "Open Sans", sans-serif; text-align: center; }
.lang { text-align: center; width: 40px; margin-left: -1px; }
.clock { text-align: right; letter-spacing: .25px; }
.taskbar > svg:last-child { margin-left: 11px; }
```
FILE: app.js
```js
const sales = `Alabama 46,826.45|Arizona 14,367.86|Arkansas 11,724.43|California 2,84,805.41|Colorado 45,843.45|Connecticut 6,540.54|Delaware 1,257.76|District of Columbia 68,946.66|Florida 81,205.22|Georgia 29,050.79|Idaho 13,922.92|Illinois 98,971.25|Indiana 39,314.55|Iowa 10,977.69|Kansas 29,678.21|Kentucky 14,737.27|Louisiana 14,909.43|Maine 30,532.71|Maryland 15,403.56|Massachusetts 59,114.82|Michigan 69,641.81|Minnesota 37,752.28|Mississippi 9,689.58|Missouri 10,903.08|Montana 12,593.59|Nebraska 15,764.51|Nevada 8,864.54|New Hampshire 7,619.70|New Jersey 21,943.91`;
let html = '<span class="hd">State<svg><use href="#tri"/></svg></span><span class="hd s">Sum of Sales</span><span></span><span class="hd s">STATE</span><span class="hd s">Sum of Sales</span>';
for (const row of sales.split('|')) {
  const cut = row.lastIndexOf(' ');
  const state = row.slice(0, cut), amount = row.slice(cut + 1);
  const short = state === 'District of Columbia' ? 'District of' : state;
  html += `<span>${state}</span><span class="num">${Number(amount.replaceAll(',', ''))}</span><span></span><span class="h">${short}</span><span class="num">$${amount}</span>`;
}
document.getElementById('cells').innerHTML = html;

// Each entry: fill colour, then the outline of a state in map units.
const shapes = [
  ['#bbd2ac', '290,166 300,178 322,186 312,205 318,218 328,210 333,188 331,160 435,192 420,290 380,277 330,278 307,270 304,250 289,240'],
  ['#d9e9cf', '289,240 304,250 307,270 330,278 380,277 420,290 425,302 410,325 395,420 245,376 250,340 270,300'],
  ['#ddecd3', '330,404 454,437 425,625 408,632 403,665 310,500'],
  ['#548235', '246,377 330,402 310,500 403,665 400,680 408,695 393,720 393,743 331,737 328,712 315,690 300,675 282,655 268,648 265,610 250,575 254,545 246,520 262,515 240,512 234,480 238,435 230,425 234,405 248,390'],
  ['#dceacf', '435,192 454,197 450,235 470,285 470,315 480,330 490,360 528,360 516,448 395,420 410,325 425,302 420,290'],
  ['#dce9d0', '454,197 560,220 680,237 669,367 530,350 526,362 490,360 480,320 468,315 472,285 450,235'],
  ['#e1eed8', '530,350 669,367 661,504 512,484'],
  ['#d6e7ca', '454,437 516,448 512,484 554,492 540,626 428,604'],
  ['#cddfc0', '554,492 702,508 696,643 540,626'],
  ['#dae9cf', '428,604 538,626 517,817 470,808 387,748 395,742 396,715 408,695 403,665 408,632 422,635'],
  ['#deebd3', '538,626 674,643 662,812 578,805 537,806 537,819 517,817'],
  ['#e0edd7', '680,237 810,244 820,346 673,338'],
  ['#e0edd7', '673,338 820,346 824,428 822,458 800,448 666,438'],
  ['#dae8cd', '666,438 800,448 822,458 832,480 845,548 702,543 702,508 661,504'],
  ['#d5e5c7', '702,543 845,548 862,575 863,649 697,643'],
  ['#dcebd3', '674,643 863,649 869,767 845,755 820,760 780,750 740,735 740,665 673,660'],
  ['#b3cca3', '673,661 740,665 740,735 760,738 780,750 800,752 820,760 845,755 878,768 880,850 890,865 887,895 855,912 810,955 797,985 802,1025 775,1020 755,1010 740,970 715,910 695,888 670,887 655,913 622,890 615,855 578,805 662,812'],
  ['#d0e2c4', '810,244 850,244 852,232 858,250 885,262 900,265 955,273 905,320 895,355 905,385 930,427 824,428 816,330'],
  ['#dceacf', '824,427 928,427 938,460 955,480 932,525 838,527 822,458'],
  ['#dceacf', '838,527 932,525 932,545 955,570 958,600 980,630 983,650 965,680 965,663 863,667 862,575 845,548'],
  ['#dbe9ce', '863,667 965,663 973,680 966,712 947,750 945,783 880,785 869,767'],
  ['#dae9cf', '880,785 945,783 948,805 940,850 983,850 990,870 985,880 1003,912 980,905 965,912 945,908 920,895 887,895 890,865 880,850'],
  ['#d6e6ca', '905,320 935,310 950,325 990,340 998,362 1008,345 1002,455 945,458 928,427 900,385 895,355'],
  ['#b2caa2', '945,458 1002,455 1014,475 1015,590 1000,630 985,640 958,605 955,570 932,540 932,520 955,480'],
  ['#c1d6b3', '945,322 988,287 982,302 1010,310 1045,305 1080,325 1040,328 1010,337 1000,350 990,340 950,328'],
  ['#c1d6b3', '1032,475 1040,440 1028,400 1036,360 1055,338 1085,350 1090,375 1080,400 1102,388 1112,440 1098,470'],
  ['#d0e2c4', '1014,477 1069,473 1077,570 1050,600 1010,612 1016,590'],
  ['#c0d5b2', '1069,473 1110,475 1158,450 1162,505 1155,540 1130,573 1077,570'],
  ['#d9e9cf', '1010,612 1050,600 1077,570 1128,575 1146,605 1115,640 985,658 985,640'],
  ['#d2e3c6', '983,658 1155,636 1103,697 968,712'],
  ['#deebd3', '968,712 1015,710 1018,865 990,870 983,850 940,850 947,790 947,750'],
  ['#ccdfc0', '1015,710 1073,703 1097,800 1097,838 1038,843 1045,860 1030,862 1018,865'],
  ['#d5e5c9', '1073,703 1127,697 1150,735 1190,785 1187,832 1172,832 1170,845 1100,845 1097,800'],
  ['#bcd3ae', '1038,845 1097,838 1102,845 1170,845 1172,832 1187,832 1190,850 1215,900 1240,950 1240,1010 1222,1015 1200,985 1175,960 1167,930 1165,890 1135,863 1100,880 1080,862 1045,860'],
  ['#d8e8cd', '1127,697 1175,682 1210,687 1238,712 1225,745 1190,785 1150,735'],
  ['#cee1c2', '1155,636 1285,612 1292,640 1280,680 1255,690 1238,712 1210,687 1175,682 1127,695 1103,697'],
  ['#ccdfbf', '1115,640 1146,605 1180,610 1215,540 1250,530 1285,565 1283,610'],
  ['#dbe9ce', '1162,505 1168,525 1215,515 1215,540 1185,605 1155,612 1128,580 1135,560'],
  ['#dbe9ce', '1168,525 1270,507 1290,550 1260,560 1250,530 1215,515'],
  ['#dfedd6', '1272,507 1290,548 1278,545'],
  ['#cbdebe', '1158,450 1265,425 1280,445 1278,470 1288,495 1275,507 1168,523'],
  ['#d6e6cb', '1280,440 1300,450 1300,500 1292,515 1275,498 1288,490 1278,470'],
  ['#73995b', '1172,445 1188,418 1180,403 1195,393 1230,388 1240,375 1236,360 1252,325 1283,315 1302,400 1303,447 1265,425'],
  ['#548235', '1300,460 1303,450 1335,438 1320,455'],
  ['#dfecd5', '1285,315 1322,305 1316,382 1302,385'],
  ['#deebd4', '1322,300 1330,292 1350,365 1340,378 1316,382'],
  ['#d4e5c9', '1330,290 1345,210 1358,214 1370,208 1385,255 1408,280 1390,300 1360,325 1350,365'],
  ['#c3d8b6', '1302,387 1350,373 1355,390 1375,400 1372,408 1355,410 1345,402 1302,410'],
  ['#dbe9d0', '1302,410 1340,402 1340,428 1305,443'],
  ['#dbe9d0', '1340,403 1352,412 1342,428'],
  ['#e0e0e0', '303,858 315,840 340,830 393,840 410,950 440,960 470,985 478,998 450,985 430,955 410,953 370,950 355,975 330,1000 280,1025 240,1030 300,1012 330,990 335,970 312,970 292,945 305,920 292,910 318,900 292,890 315,880'],
  ['#e0e0e0', '608,978 632,998 610,1017 602,1000'],
  ['#e0e0e0', '582,952 600,958 594,962'],
  ['#e0e0e0', '544,930 554,935 547,938'],
  ['#e0e0e0', '503,910 511,909 510,917 504,917'],
  ['#ffffff', '1262,510 1268,512 1270,548 1258,525']
];
document.getElementById('map').innerHTML = shapes.map(([fill, pts]) => `<polygon points="${pts}" fill="${fill}" stroke="#fff" stroke-opacity=".75" stroke-width="${fill === '#e0e0e0' ? 0 : 2.5}"/>`).join('');
```
